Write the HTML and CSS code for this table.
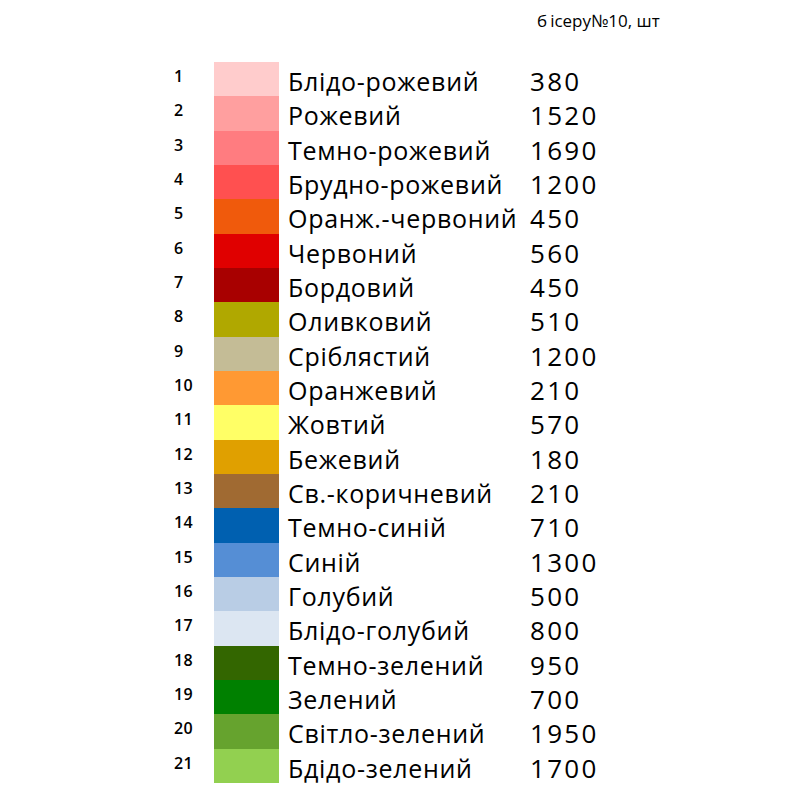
FILE: index.html
```html
<!DOCTYPE html>
<html lang="uk">
<head>
<meta charset="utf-8">
<link rel="stylesheet" href="styles.css">
</head>
<body>
<div class="page">
  <div class="header"><span class="gap">б</span>ісеру№10, шт</div>
  <div class="table">
    <div class="row"><span class="num">1</span><span class="sw" style="background:#FFCCCC"></span><span class="name">Блідо-рожевий</span><span class="cnt">380</span></div>
    <div class="row"><span class="num">2</span><span class="sw" style="background:#FF9F9F"></span><span class="name">Рожевий</span><span class="cnt">1520</span></div>
    <div class="row"><span class="num">3</span><span class="sw" style="background:#FF7C80"></span><span class="name">Темно-рожевий</span><span class="cnt">1690</span></div>
    <div class="row"><span class="num">4</span><span class="sw" style="background:#FF5050"></span><span class="name">Брудно-рожевий</span><span class="cnt">1200</span></div>
    <div class="row"><span class="num">5</span><span class="sw" style="background:#F05A0C"></span><span class="name">Оранж.-червоний</span><span class="cnt">450</span></div>
    <div class="row"><span class="num">6</span><span class="sw" style="background:#E00000"></span><span class="name">Червоний</span><span class="cnt">560</span></div>
    <div class="row"><span class="num">7</span><span class="sw" style="background:#A80000"></span><span class="name">Бордовий</span><span class="cnt">450</span></div>
    <div class="row"><span class="num">8</span><span class="sw" style="background:#B0A800"></span><span class="name">Оливковий</span><span class="cnt">510</span></div>
    <div class="row"><span class="num">9</span><span class="sw" style="background:#C4BC96"></span><span class="name">Сріблястий</span><span class="cnt">1200</span></div>
    <div class="row"><span class="num">10</span><span class="sw" style="background:#FF9933"></span><span class="name">Оранжевий</span><span class="cnt">210</span></div>
    <div class="row"><span class="num">11</span><span class="sw" style="background:#FFFF66"></span><span class="name">Жовтий</span><span class="cnt">570</span></div>
    <div class="row"><span class="num">12</span><span class="sw" style="background:#E0A000"></span><span class="name">Бежевий</span><span class="cnt">180</span></div>
    <div class="row"><span class="num">13</span><span class="sw" style="background:#A06A32"></span><span class="name">Св.-коричневий</span><span class="cnt">210</span></div>
    <div class="row"><span class="num">14</span><span class="sw" style="background:#0060B0"></span><span class="name">Темно-синій</span><span class="cnt">710</span></div>
    <div class="row"><span class="num">15</span><span class="sw" style="background:#558ED5"></span><span class="name">Синій</span><span class="cnt">1300</span></div>
    <div class="row"><span class="num">16</span><span class="sw" style="background:#B9CDE5"></span><span class="name">Голубий</span><span class="cnt">500</span></div>
    <div class="row"><span class="num">17</span><span class="sw" style="background:#DCE6F2"></span><span class="name">Блідо-голубий</span><span class="cnt">800</span></div>
    <div class="row"><span class="num">18</span><span class="sw" style="background:#336600"></span><span class="name">Темно-зелений</span><span class="cnt">950</span></div>
    <div class="row"><span class="num">19</span><span class="sw" style="background:#008000"></span><span class="name">Зелений</span><span class="cnt">700</span></div>
    <div class="row"><span class="num">20</span><span class="sw" style="background:#66A32E"></span><span class="name">Світло-зелений</span><span class="cnt">1950</span></div>
    <div class="row"><span class="num">21</span><span class="sw" style="background:#92D050"></span><span class="name">Бдідо-зелений</span><span class="cnt">1700</span></div>
  </div>
</div>
</body>
</html>
```

FILE: styles.css
```css
html, body {
  margin: 0;
  padding: 0;
  background: #ffffff;
}
.page {
  width: 800px;
  height: 800px;
  font-family: "Open Sans", "Liberation Sans", sans-serif;
  color: #000000;
}
.header {
  padding: 10px 0 0 537px;
  height: 62px;
  box-sizing: border-box;
  font-size: 17px;
  line-height: 22px;
}
.gap {
  margin-right: 3px;
}
.table {
  padding-left: 174px;
}
.row {
  display: grid;
  grid-template-columns: 40px 65px 251px auto;
  height: 34.33px;
  align-items: start;
}
.num {
  font-size: 16px;
  font-weight: 600;
  line-height: 16px;
  padding-top: 6px;
  letter-spacing: 0.3px;
}
.sw {
  height: 34.33px;
}
.name {
  padding-left: 9px;
  font-size: 25px;
  line-height: 28px;
  padding-top: 5px;
  letter-spacing: 0.7px;
}
.cnt {
  font-size: 26px;
  line-height: 28px;
  padding-top: 5px;
  letter-spacing: 2.3px;
}
```
